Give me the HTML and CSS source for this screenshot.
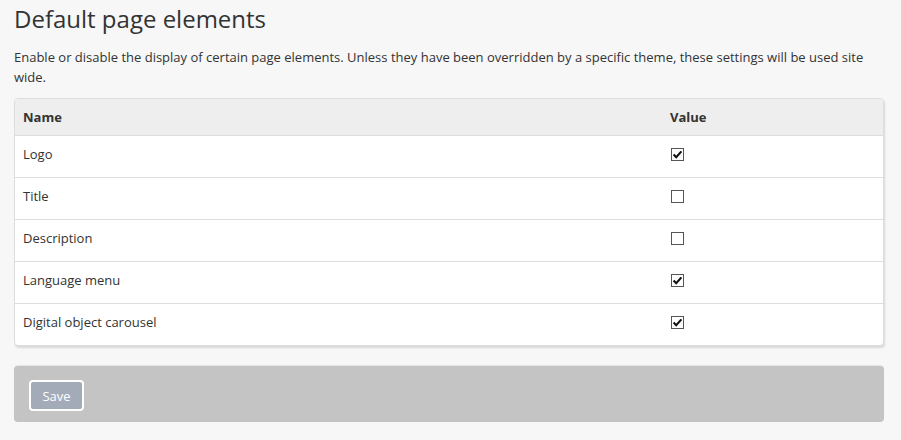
FILE: index.html
```html
<!DOCTYPE html>
<html>
<head>
<meta charset="utf-8">
<link rel="stylesheet" href="styles.css">
</head>
<body>
<div class="page">
  <h1 class="title">Default page elements</h1>
  <p class="intro">Enable or disable the display of certain page elements. Unless they have been overridden by a specific theme, these settings will be used site wide.</p>
  <div class="panel">
    <table class="grid">
      <thead>
        <tr><th class="c-name">Name</th><th class="c-val">Value</th></tr>
      </thead>
      <tbody>
        <tr><td>Logo</td><td><span class="cb on"><svg viewBox="0 0 11 11" width="11" height="11"><path d="M1.6 5.6 L4.2 8.3 L9.4 2.4" fill="none" stroke="#111" stroke-width="2.1"/></svg></span></td></tr>
        <tr><td>Title</td><td><span class="cb"></span></td></tr>
        <tr><td>Description</td><td><span class="cb"></span></td></tr>
        <tr><td>Language menu</td><td><span class="cb on"><svg viewBox="0 0 11 11" width="11" height="11"><path d="M1.6 5.6 L4.2 8.3 L9.4 2.4" fill="none" stroke="#111" stroke-width="2.1"/></svg></span></td></tr>
        <tr><td>Digital object carousel</td><td><span class="cb on"><svg viewBox="0 0 11 11" width="11" height="11"><path d="M1.6 5.6 L4.2 8.3 L9.4 2.4" fill="none" stroke="#111" stroke-width="2.1"/></svg></span></td></tr>
      </tbody>
    </table>
  </div>
  <div class="actions">
    <button class="save">Save</button>
  </div>
</div>
</body>
</html>
```
FILE: styles.css
```css
html, body {
  margin: 0;
  padding: 0;
  background: #f7f7f7;
}
body {
  font-family: "Open Sans", "DejaVu Sans", sans-serif;
  color: #333;
  font-size: 13px;
}
.page {
  padding: 0 17px 0 14px;
}
.title {
  margin: 0;
  padding-top: 4px;
  font-size: 24px;
  font-weight: 400;
  line-height: 30px;
  color: #333;
}
.intro {
  margin: 13px 0 11px;
  line-height: 20px;
}
.panel {
  background: #fff;
  border: 1px solid #ddd;
  border-radius: 4px;
  box-shadow: 1px 2px 2px rgba(0,0,0,0.12);
  overflow: hidden;
}
.grid {
  width: 100%;
  border-collapse: collapse;
}
.grid th {
  background: #eee;
  text-align: left;
  font-weight: 700;
  height: 36px;
  padding: 0 8px;
  border-bottom: 1px solid #ddd;
}
.grid th.c-val {
  width: 205px;
  padding-left: 0;
}
.grid td {
  height: 36px;
  padding: 0 8px 5px;
  border-bottom: 1px solid #ddd;
}
.grid td + td {
  padding-left: 0;
}
.grid tbody tr:last-child td {
  border-bottom: none;
}
.cb {
  display: inline-flex;
  align-items: center;
  justify-content: center;
  box-sizing: border-box;
  width: 13px;
  height: 13px;
  border: 1px solid #555;
  background: #fff;
  vertical-align: middle;
  margin: 0 0 2px 1px;
}
.actions {
  margin-top: 20px;
  background: #c4c4c4;
  border-radius: 4px;
  padding: 14px 15px 11px;
  box-shadow: 0 -1px 1px rgba(0,0,0,0.08);
}
.save {
  font-family: "Open Sans", "DejaVu Sans", sans-serif;
  font-size: 13px;
  color: #fff;
  background: #a3abb9;
  border: 2px solid #fff;
  border-radius: 4px;
  width: 55px;
  height: 31px;
  padding: 0;
  cursor: pointer;
}
```
